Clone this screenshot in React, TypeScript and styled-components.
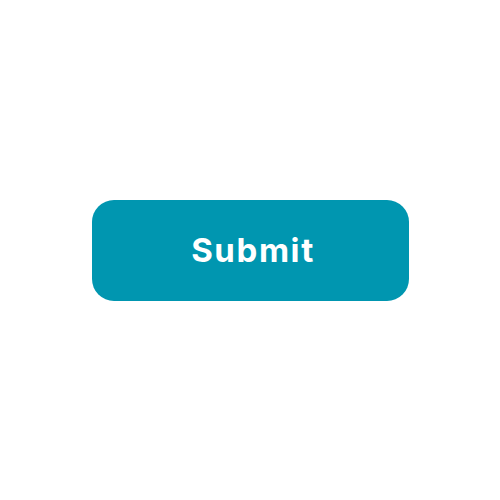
import styled, { createGlobalStyle } from 'styled-components'

const Global = createGlobalStyle`
  html, body {
    margin: 0;
    padding: 0;
    background: #ffffff;
  }
`

const Page = styled.div`
  height: 500px;
  width: 500px;
  display: flex;
  justify-content: center;
  align-items: center;
`

const Button = styled.button`
  width: 317px;
  height: 101px;
  border: none;
  border-radius: 22px;
  background: #0096b0;
  color: #ffffff;
  font-family: Inter, 'Noto Sans', sans-serif;
  font-weight: 700;
  font-size: 33px;
  letter-spacing: 1.6px;
  display: flex;
  justify-content: center;
  align-items: center;
  cursor: pointer;
  padding: 0 0 0 6px;
`

const App = () => {
  return (
    <>
      <Global />
      <Page>
        <Button>Submit</Button>
      </Page>
    </>
  )
}

export default App
